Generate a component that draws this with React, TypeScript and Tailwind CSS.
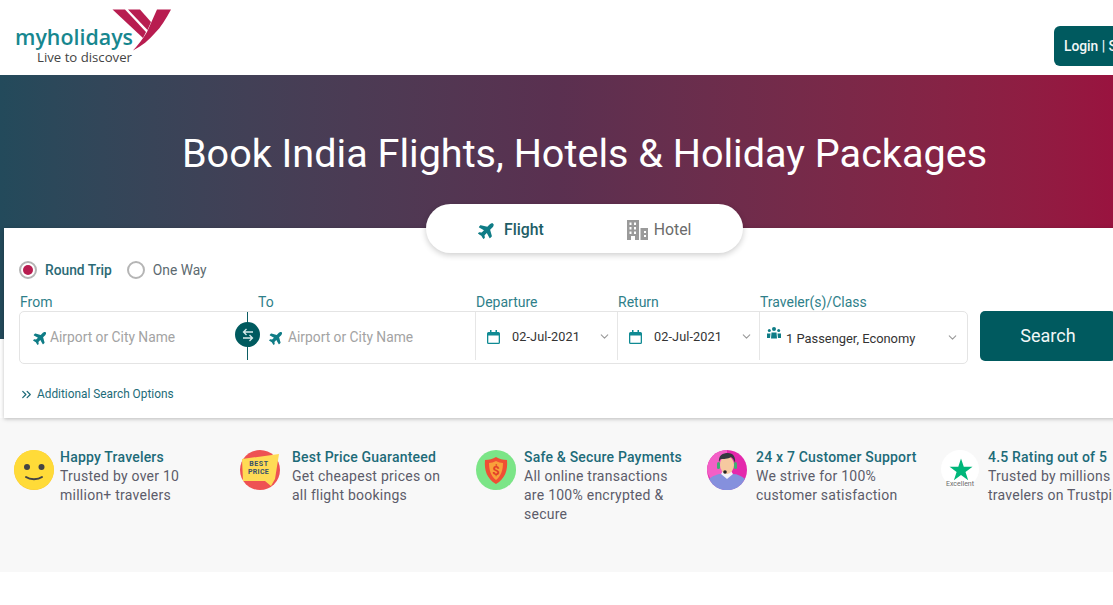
import { ChevronDown, ChevronsRight } from "lucide-react";
import { FaPlane } from "react-icons/fa";

function Logo() {
  return (
    <svg width="180" height="70" viewBox="0 0 180 70" className="block shrink-0">
      <polygon fill="#b81d50" points="112.5,9.5 125,9.5 146,32 143,38" />
      <polygon fill="#b81d50" points="128,9.5 140,9.5 151,22 147.500,30" />
      <path fill="#b81d50" d="M157 9.500 L171 9.500 C166 19 161 27 155 33 C149 40 142 46 133 50.500 C138 45 143 39 147 32 L157 9.500 Z" />
      <text x="15" y="45" fill="#17878f" fontFamily="'Open Sans', sans-serif" fontWeight="600" fontSize="21.5" textLength="118" lengthAdjust="spacingAndGlyphs">myholidays</text>
      <text x="37" y="61.500" fill="#444444" fontFamily="'Open Sans', sans-serif" fontSize="12.5" textLength="95" lengthAdjust="spacingAndGlyphs">Live to discover</text>
    </svg>
  );
}

function HotelIcon() {
  return (
    <svg width="21" height="20" viewBox="0 0 21 20" className="shrink-0">
      <path fill="#9a9a9a" fillRule="evenodd" d="M0 0h12v20H8v-4H4v4H0V0Zm2.500 2.500v2.500h2V2.500h-2Zm4.500 0v2.500h2V2.500h-2Zm-4.500 4.500v2.500h2V7h-2Zm4.500 0v2.500h2V7h-2Zm-4.500 4.500v2.500h2v-2.500h-2Zm4.500 0v2.500h2v-2.500h-2Z" />
      <path fill="#9a9a9a" fillRule="evenodd" d="M13.500 8H21v12h-7.500V8Zm3.500 3v2h2v-2h-2Zm0 4v2h2v-2h-2Z" />
    </svg>
  );
}

function CalendarIcon() {
  return (
    <svg width="13" height="14" viewBox="0 0 13 14" className="shrink-0">
      <path fill="#0f8a93" d="M3 0h1.500v2h4V0H10v2h1.500A1.500 1.500 0 0 1 13 3.500v9a1.500 1.500 0 0 1-1.500 1.500h-10A1.500 1.500 0 0 1 0 12.500v-9A1.500 1.500 0 0 1 1.500 2H3V0Zm-1.700 5.500v7.200h10.400V5.500H1.300Z" />
    </svg>
  );
}

function SwapIcon() {
  return (
    <svg width="14" height="14" viewBox="0 0 14 14" fill="none" stroke="#d9ecec" strokeWidth="1.300">
      <path d="M12 4H2.500M5.500 1 2.500 4l3 3" />
      <path d="M2 10h9.500M8.500 7l3 3-3 3" />
    </svg>
  );
}

function GroupIcon() {
  return (
    <svg width="14" height="12" viewBox="0 0 14 12" className="shrink-0">
      <g fill="#0f7c86">
        <circle cx="7" cy="2" r="2" />
        <path d="M4.500 5.500h5l.5 6H4Z" />
        <circle cx="2.300" cy="3.500" r="1.500" />
        <path d="M0 6.500h3.500L3 11H0Z" />
        <circle cx="11.700" cy="3.500" r="1.500" />
        <path d="M10.500 6.500H14V11h-3Z" />
      </g>
    </svg>
  );
}

function Smiley() {
  return (
    <svg width="40" height="40" viewBox="0 0 40 40">
      <circle cx="20" cy="20" r="20" fill="#fbc933" />
      <path fill="#ffdb38" d="M20 0a20 20 0 0 1 15 33A20 20 0 0 1 1 14 20 20 0 0 1 20 0Z" />
      <circle cx="13" cy="17" r="3" fill="#444444" />
      <circle cx="27.500" cy="17" r="3" fill="#444444" />
      <path d="M12 27c4 3 12 3 16 0" fill="none" stroke="#444444" strokeWidth="2" strokeLinecap="round" />
    </svg>
  );
}

function BestPrice() {
  return (
    <svg width="40" height="40" viewBox="0 0 40 40">
      <circle cx="20" cy="20" r="20" fill="#ee5253" />
      <polygon fill="#ffdb55" points="2,9 39,4 35,29 31,36 25,31 3,31" />
      <text x="19" y="16" textAnchor="middle" fontFamily="Roboto, sans-serif" fontWeight="700" fontSize="7" fill="#37516b" letterSpacing="0.6">BEST</text>
      <text x="18.500" y="24" textAnchor="middle" fontFamily="Roboto, sans-serif" fontWeight="700" fontSize="7" fill="#37516b" letterSpacing="0.3">PRICE</text>
    </svg>
  );
}

function Shield() {
  return (
    <svg width="40" height="40" viewBox="0 0 40 40">
      <circle cx="20" cy="20" r="20" fill="#7be587" />
      <path fill="#5fcf70" d="M20 40a20 20 0 0 0 20-20c0-6-2-10-5-13a20 20 0 0 1-24 31c3 1 6 2 9 2Z" />
      <path fill="#ef4f34" d="M20 7c3 2 7 3 11 3 1 10-2 19-11 24C11 29 8 20 9 10c4 0 8-1 11-3Z" />
      <path fill="#f9a03a" d="M20 11c2 1 5 2 7 2 0 7-2 13-7 17-5-4-7-10-7-17 2 0 5-1 7-2Z" />
      <text x="20" y="25" textAnchor="middle" fontFamily="Roboto, sans-serif" fontWeight="700" fontSize="13" fill="#e23d28">$</text>
    </svg>
  );
}

function Agent() {
  return (
    <svg width="40" height="40" viewBox="0 0 40 40">
      <ellipse cx="20" cy="20" rx="20" ry="20" fill="#e428ac" />
      <path fill="#f35fc6" d="M0 20a20 20 0 0 1 20-20v28H3a20 20 0 0 1-3-8Z" />
      <path fill="#8590dd" d="M2 29c3-3 9-5 12-5h12c4 0 9 2 12 5a20 20 0 0 1-36 0Z" />
      <path fill="#f2f2f8" d="M14 24l6 5 6-5-2-3h-8z" />
      <ellipse cx="20" cy="15" rx="7" ry="9" fill="#f6c9a0" />
      <path fill="#35383f" d="M12 13C11 5 16 3 21 3c5 0 8 4 7 10-1-3-2-5-4-6-3 2-8 2-10 2-1 1-2 2-2 4Z" />
      <rect x="10" y="12" width="3" height="7" rx="1.500" fill="#3fae72" />
      <rect x="27" y="12" width="3" height="7" rx="1.500" fill="#3fae72" />
      <circle cx="18" cy="22" r="1.800" fill="#222222" />
    </svg>
  );
}

function Trust() {
  return (
    <svg width="38" height="40" viewBox="0 0 38 40">
      <circle cx="19" cy="19" r="19" fill="#ffffff" />
      <path fill="#00b67a" d="M20 8.500l2.800 8.300h8.700l-7 5.100 2.700 8.300-7.200-5.200-7.100 5.200 2.700-8.300-7-5.100h8.700z" />
      <text x="19" y="36" textAnchor="middle" fontFamily="Roboto, sans-serif" fontSize="7" fill="#6b6b6b">Excellent</text>
    </svg>
  );
}

const features = [
  { icon: <Smiley />, pad: "pl-[6px]", title: "Happy Travelers", lines: ["Trusted by over 10", "million+ travelers"] },
  { icon: <BestPrice />, pad: "pl-0", title: "Best Price Guaranteed", lines: ["Get cheapest prices on", "all flight bookings"] },
  { icon: <Shield />, pad: "pl-[4px]", title: "Safe & Secure Payments", lines: ["All online transactions", "are 100% encrypted &", "secure"] },
  { icon: <Agent />, pad: "pl-[3px]", title: "24 x 7 Customer Support", lines: ["We strive for 100%", "customer satisfaction"] },
  { icon: <Trust />, pad: "pl-[5px]", title: "4.5 Rating out of 5", lines: ["Trusted by millions of", "travelers on Trustpilot"] },
];

function DateCell() {
  return (
    <div className="flex h-[48px] w-[142px] items-center border-r border-[#e6e6e6] pl-[11px] pr-[6px] pt-[1px]">
      <CalendarIcon />
      <span className="ml-[12px] text-[12.7px] text-[#333333] tracking-[0.1px]">02-Jul-2021</span>
      <ChevronDown className="ml-auto text-[#9a9a9a]" size={13} />
    </div>
  );
}

export default function App() {
  return (
    <div className="w-full min-h-[605px] overflow-hidden bg-white font-['Roboto',sans-serif]">
      <div className="w-[1169px]">
        <header className="flex h-[75px] items-start bg-white">
          <Logo />
          <button className="ml-auto mt-[26px] h-[40px] w-[115px] rounded-[6px] bg-[#005a5f] pl-[10px] text-left text-[13.8px] font-medium whitespace-nowrap text-[#f2f7f7]">
            Login | Sign Up
          </button>
        </header>

        <section className="h-[264px] w-[1113px] bg-gradient-to-r from-[#234a5b] via-[#5a3050] via-50% to-[#99133f]">
          <h1 className="w-[1169px] pt-[52px] text-center text-[39.6px] leading-[54px] font-normal text-white">
            Book India Flights, Hotels &amp; Holiday Packages
          </h1>
        </section>

        <div className="relative z-10 ml-[4px] -mt-[111px] h-[190px] w-[1165px] bg-white pl-[15px] pt-[32px] shadow-[0_1px_4px_rgba(0,0,0,0.25)]">
          <div className="absolute -top-[24px] left-[422px] flex h-[49px] w-[317px] items-center rounded-[25px] bg-white pt-[2px] shadow-[0_2px_6px_rgba(0,0,0,0.2)]">
            <FaPlane className="ml-[52px] -rotate-45 text-[#0f7c86]" size={18} />
            <span className="ml-[8px] text-[15.8px] font-medium text-[#1d5d66]">Flight</span>
            <div className="ml-[83px]"><HotelIcon /></div>
            <span className="ml-[6px] text-[15.8px] text-[#6b6b6b]">Hotel</span>
          </div>

          <div className="flex h-[20px] items-center">
            <span className="flex h-[18px] w-[18px] items-center justify-center rounded-full border-2 border-[#b5b5b5]">
              <span className="h-[10px] w-[10px] rounded-full bg-[#b81d50]" />
            </span>
            <span className="ml-[8px] text-[13.8px] font-medium text-[#2b6a75]">Round Trip</span>
            <span className="ml-[15px] h-[18px] w-[18px] rounded-full border-2 border-[#b5b5b5]" />
            <span className="ml-[8px] text-[13.8px] text-[#5d6a70]">One Way</span>
          </div>

          <div className="mt-[14px] flex h-[17px] items-center text-[14px] leading-[17px] text-[#2f7f8a]">
            <span className="w-[239px] pl-[1px]">From</span>
            <span className="w-[218px]">To</span>
            <span className="w-[142px]">Departure</span>
            <span className="w-[142px]">Return</span>
            <span>Traveler(s)/Class</span>
          </div>

          <div className="flex items-start">
            <div className="flex h-[53px] w-[949px] shrink-0 items-start rounded-[5px] border border-[#e4e4e4]">
              <div className="relative flex h-[48px] w-[228px] items-center border-r border-[#0b5d63] pl-[13px] pt-[2px]">
                <FaPlane className="-rotate-45 text-[#0f7c86]" size={15} />
                <span className="ml-[2px] text-[13.8px] text-[#a3a3a3]">Airport or City Name</span>
                <span className="absolute -right-[13px] top-[10px] flex h-[25px] w-[25px] items-center justify-center rounded-full bg-[#005a5f]">
                  <SwapIcon />
                </span>
              </div>
              <div className="flex h-[48px] w-[228px] items-center border-r border-[#e6e6e6] pl-[21px] pt-[2px]">
                <FaPlane className="-rotate-45 text-[#0f7c86]" size={15} />
                <span className="ml-[4px] text-[13.8px] text-[#a3a3a3]">Airport or City Name</span>
              </div>
              <DateCell />
              <DateCell />
              <div className="flex h-[51px] flex-1 items-center pl-[7px] pr-[8px]">
                <div className="-mt-[9px]"><GroupIcon /></div>
                <span className="ml-[5px] mt-[2px] text-[12.9px] whitespace-nowrap text-[#333333]">1 Passenger, Economy</span>
                <ChevronDown className="ml-auto text-[#9a9a9a]" size={13} />
              </div>
            </div>
            <button className="ml-[12px] h-[50px] w-[136px] shrink-0 rounded-[5px] bg-[#005a5f] pb-[2px] text-[18px] text-[#f2f7f7]">
              Search
            </button>
          </div>

          <div className="mt-[22px] flex items-center">
            <ChevronsRight className="text-[#1d6b78]" size={15} />
            <span className="ml-[3px] text-[11.85px] text-[#1d6b78]">Additional Search Options</span>
          </div>
        </div>

        <section className="grid h-[154px] w-[1169px] grid-cols-[232px_232px_232px_232px_232px] bg-[#f8f8f8] pl-[8px] pt-[31px]">
          {features.map((f) => (
            <div key={f.title} className="flex items-start">
              <div className={`mt-[1px] w-[52px] shrink-0 ${f.pad}`}>{f.icon}</div>
              <div className="whitespace-nowrap text-[14px] leading-[19px] tracking-[0.25px]">
                <div className="-mt-[1px] font-medium tracking-[0.2px] text-[#1d6b78]">{f.title}</div>
                {f.lines.map((l) => (
                  <div key={l} className="text-[#5c5c6a]">{l}</div>
                ))}
              </div>
            </div>
          ))}
        </section>
      </div>
    </div>
  );
}
